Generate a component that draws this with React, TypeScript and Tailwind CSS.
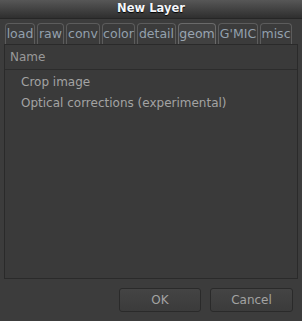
import React from "react";

const tabs: { label: string; w: string; active?: boolean }[] = [
  { label: "load", w: "w-[30px]" },
  { label: "raw", w: "w-[27px]" },
  { label: "conv", w: "w-[34px]" },
  { label: "color", w: "w-[33px]" },
  { label: "detail", w: "w-[39px]" },
  { label: "geom", w: "w-[38px]", active: true },
  { label: "G'MIC", w: "w-[40px]" },
  { label: "misc", w: "w-[32px]" },
];

const items = ["Crop image", "Optical corrections (experimental)"];

export default function App() {
  return (
    <div
      className="w-[302px] h-[321px] bg-[#3c3c3c] flex flex-col text-[12px] text-[#a3a3a3]"
      style={{ fontFamily: '"DejaVu Sans", sans-serif' }}
    >
      <div className="h-[19px] shrink-0 bg-gradient-to-b from-[#575757] to-[#2f2f2f] flex items-center justify-center border-b border-[#262626]">
        <span className="text-[11.5px] font-bold text-[#f4f6fa] [text-shadow:0_1px_1px_#000]">New Layer</span>
      </div>

      <div className="flex gap-[2px] pl-[5px] mt-[4px] h-[21px] shrink-0">
        {tabs.map((t) => (
          <div
            key={t.label}
            className={`${t.w} h-full border border-b-0 rounded-t-[4px] flex items-center justify-center text-[12.5px] leading-none ${
              t.active ? "bg-[#414141] border-[#6a6a6a] text-[#9aa5b1]" : "bg-[#3b3b3b] border-[#5c5c5c] text-[#93a0ad]"
            }`}
          >
            {t.label}
          </div>
        ))}
      </div>

      <div className="mx-[4px] h-[235px] shrink-0 border border-[#2a2a2a] bg-[#3a3a3a] flex flex-col">
        <div className="h-[25px] border-b border-[#2c2c2c] flex items-center pl-[5px] text-[#999]">Name</div>
        <div className="pt-[1px]">
          {items.map((i) => (
            <div key={i} className="h-[21px] flex items-center pl-[16px]">
              {i}
            </div>
          ))}
        </div>
      </div>

      <div className="flex justify-end gap-[9px] pr-[9px] mt-[9px]">
        <button className="w-[82px] h-[24px] rounded-[3px] border border-[#2a2a2a] bg-gradient-to-b from-[#444] to-[#3b3b3b] text-[#a3a3a3] text-[12px]">
          OK
        </button>
        <button className="w-[83px] h-[24px] rounded-[3px] border border-[#2a2a2a] bg-gradient-to-b from-[#444] to-[#3b3b3b] text-[#a3a3a3] text-[12px]">
          Cancel
        </button>
      </div>
    </div>
  );
}
